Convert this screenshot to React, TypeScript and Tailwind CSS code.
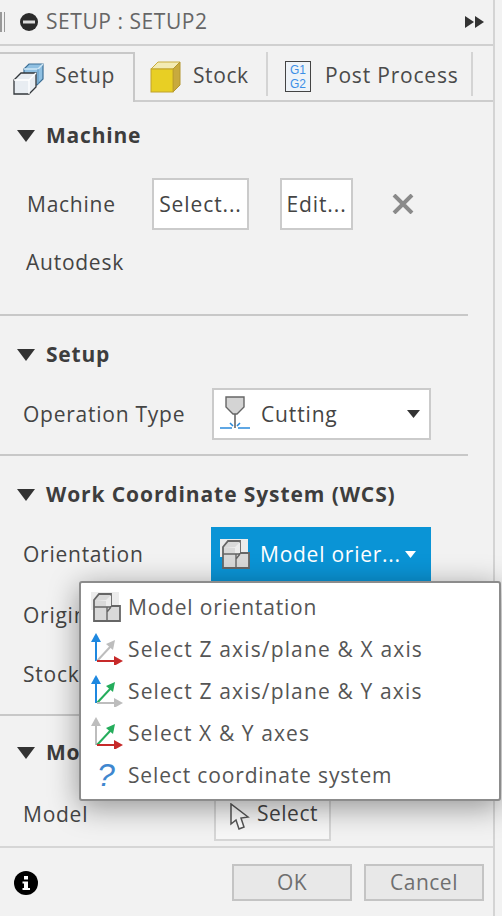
import type { ReactNode } from 'react'

const font = { fontFamily: '"Open Sans", "DejaVu Sans", sans-serif' }

function Caret() {
  return (
    <svg width="18" height="12" viewBox="0 0 18 12" className="shrink-0">
      <polygon points="0,0 18,0 9,12" fill="#333" />
    </svg>
  )
}

function Heading({ children, className = 'tracking-[0.8px]' }: { children: ReactNode; className?: string }) {
  return (
    <div className="ml-[17px] flex h-[28px] items-center gap-[11px]">
      <Caret />
      <span className={`text-[21px] font-bold text-[#3d3d3d] ${className}`}>{children}</span>
    </div>
  )
}

function Label({ children, className = '' }: { children: ReactNode; className?: string }) {
  return <span className={`text-[21px] tracking-[0.75px] text-[#444] ${className}`}>{children}</span>
}

function SetupIcon() {
  return (
    <svg width="31" height="33" viewBox="0 0 31 33">
      <path d="M11 7 L16 2 L30 2 L30 17 L24 23 L11 23 Z" fill="#8fc0e2" stroke="#3c6f96" strokeWidth="1.2" />
      <path d="M11 7 L25 7 L30 2" fill="none" stroke="#cfe6f5" strokeWidth="1.4" />
      <path d="M25 7 V22" stroke="#5f98c2" strokeWidth="1" />
      <path d="M1 18 L8 11 L23 11 L23 25 L16 32 L1 32 Z" fill="#e8edf2" stroke="#33373b" strokeWidth="1.3" />
      <path d="M1 18 L16 18 L23 11 M16 18 V32" fill="none" stroke="#fff" strokeWidth="1.3" />
    </svg>
  )
}

function StockIcon() {
  return (
    <svg width="31" height="32" viewBox="0 0 31 32">
      <polygon points="1,8 8,1 30,1 23,8" fill="#f3ebb4" stroke="#c9ad3c" />
      <polygon points="23,8 30,1 30,24 23,31" fill="#c8aa3e" stroke="#b3962f" />
      <rect x="1" y="8" width="22" height="23" fill="#e8cf24" stroke="#c0a22c" />
    </svg>
  )
}

function CuttingIcon() {
  return (
    <svg width="32" height="36" viewBox="0 0 32 36">
      <path d="M6 1 H24 V11 L17 18 H13 L6 11 Z" fill="#d4d4d4" stroke="#666" strokeWidth="1.4" />
      <path d="M15 18 V32" stroke="#666" strokeWidth="1.6" />
      <path d="M0 32 H12 M18 32 H30 M10 27 L13 30 M20 27 L17 30" stroke="#2b8adb" strokeWidth="1.6" />
    </svg>
  )
}

function ModelIcon() {
  return (
    <svg width="30" height="31" viewBox="0 0 30 31" className="shrink-0">
      <rect x="0" y="0" width="28" height="18" fill="#ececec" />
      <path d="M3 8 L8 2 H20 V14 H29 V29 H3 Z" fill="#d9d9d9" stroke="#666" strokeWidth="1.8" />
      <path d="M4 8 H15 L20 3 V14 H15 V9 Z" fill="#ececec" />
      <path d="M3 15 H20 M16 15 V29 M20 15 L16 20" fill="none" stroke="#666" strokeWidth="1.4" />
    </svg>
  )
}

function AxisIcon({ up, diagonal, right }: { up: string; diagonal: string; right: string }) {
  return (
    <svg width="34" height="32" viewBox="0 0 34 32" className="shrink-0">
      <path d="M5 28 V8" stroke={up} strokeWidth="2" />
      <polygon points="0,9 5,0 10,9" fill={up} />
      <path d="M6 28 L20 13" stroke={diagonal} strokeWidth="2" />
      <polygon points="15,11 24,7 22,17" fill={diagonal} />
      <path d="M6 28 H24" stroke={right} strokeWidth="2" />
      <polygon points="23,23 32,28 23,33" fill={right} />
    </svg>
  )
}

function MenuRow({ icon, tracking, children }: { icon: ReactNode; tracking: string; children: ReactNode }) {
  return (
    <div className="flex h-[42px] items-center">
      <div className="flex w-[47px] shrink-0 justify-start pl-[10px]">{icon}</div>
      <span className={`mt-[2px] text-[21px] text-[#555] ${tracking}`}>{children}</span>
    </div>
  )
}

export default function App() {
  return (
    <div className="relative h-[916px] w-[502px] overflow-hidden bg-[#f2f2f2]" style={font}>
      <div className="h-[916px] w-[495px] border-r-2 border-[#d4d4d4]">
        <header className="flex h-[46px] items-center border-b-2 border-[#d0d0d0] pr-[8px]">
          <div className="flex h-[20px] w-[7px] gap-[2px]">
            <span className="w-[2px] bg-[#999]" />
            <span className="w-[1px] bg-[#999]" />
          </div>
          <svg width="20" height="20" viewBox="0 0 20 20" className="ml-[12px]">
            <circle cx="10" cy="10" r="9" fill="#2b2b2b" />
            <rect x="4" y="8.5" width="12" height="3" fill="#ddd" />
          </svg>
          <span className="ml-[7px] text-[21px] tracking-[0.55px] text-[#666]">SETUP : SETUP2</span>
          <svg width="20" height="12" viewBox="0 0 20 12" className="ml-auto">
            <polygon points="0,0 9,6 0,12" fill="#333" />
            <polygon points="10,0 19,6 10,12" fill="#333" />
          </svg>
        </header>

        <nav className="mt-[6px] flex h-[50px]">
          <div className="flex w-[135px] items-center gap-[11px] border-t-2 border-r-2 border-[#c8c8c8] pl-[13px]">
            <SetupIcon />
            <span className="mb-[4px] text-[21px] tracking-[0.7px] text-[#4a4a4a]">Setup</span>
          </div>
          <div className="flex flex-1 border-b-2 border-[#cdcdcd]">
            <div className="mb-[4px] flex w-[133px] items-center gap-[12px] border-r-2 border-[#d4d4d4] pt-[6px] pl-[15px]">
              <StockIcon />
              <span className="mb-[3px] text-[21px] tracking-[0.6px] text-[#4a4a4a]">Stock</span>
            </div>
            <div className="mb-[4px] flex w-[205px] items-center gap-[14px] border-r-2 border-[#d4d4d4] pt-[5px] pl-[17px]">
              <div className="flex h-[31px] w-[26px] flex-col items-center justify-center border border-[#444] bg-[#eef3f8] text-[12px] leading-[14px] text-[#3b8ee6]" style={{ fontFamily: '"Liberation Sans", sans-serif' }}>
                <span>G1</span>
                <span>G2</span>
              </div>
              <span className="mb-[2px] text-[21px] tracking-[0.8px] text-[#4a4a4a]">Post Process</span>
            </div>
          </div>
        </nav>

        <section className="h-[212px] pt-[20px]">
          <Heading>Machine</Heading>
          <div className="mt-[28px] flex h-[52px] items-center pl-[27px]">
            <Label className="mt-[2px] w-[125px] tracking-[0.5px]">Machine</Label>
            <button className="h-[52px] w-[97px] border-2 border-[#cbcbcb] bg-white pt-[2px] text-[21px] tracking-[0.9px] text-[#444]">Select...</button>
            <button className="ml-[31px] h-[52px] w-[73px] border-2 border-[#cbcbcb] bg-white pt-[2px] text-[21px] tracking-[0.9px] text-[#444]">Edit...</button>
            <svg width="22" height="20" viewBox="0 0 22 20" className="ml-[39px]">
              <path d="M2 1 L20 19 M20 1 L2 19" stroke="#8a8a8a" strokeWidth="4" />
            </svg>
          </div>
          <div className="mt-[19px] flex h-[28px] items-center pl-[26px]">
            <Label>Autodesk</Label>
          </div>
        </section>
        <div className="h-[2px] w-[468px] bg-[#c8c8c8]" />

        <section className="h-[138px] pt-[25px]">
          <Heading>Setup</Heading>
          <div className="mt-[19px] flex h-[52px] items-center pl-[23px]">
            <Label className="mt-[2px] w-[189px]">Operation Type</Label>
            <div className="flex h-[52px] w-[219px] items-center border-2 border-[#cbcbcb] bg-white pl-[6px]">
              <CuttingIcon />
              <span className="mt-[2px] ml-[9px] text-[21px] tracking-[0.85px] text-[#444]">Cutting</span>
              <svg width="13" height="8" viewBox="0 0 13 8" className="mr-[9px] ml-auto">
                <polygon points="0,0 13,0 6.5,8" fill="#333" />
              </svg>
            </div>
          </div>
        </section>
        <div className="h-[2px] w-[468px] bg-[#c8c8c8]" />

        <section className="h-[258px] pt-[25px]">
          <Heading className="tracking-[0.9px]">Work Coordinate System (WCS)</Heading>
          <div className="mt-[18px] flex h-[54px] items-center pl-[23px]">
            <Label className="mt-[2px] w-[188px]">Orientation</Label>
            <div className="flex h-[54px] w-[220px] items-center bg-[#0a94d6] pl-[9px]">
              <ModelIcon />
              <span className="mt-[2px] ml-[10px] text-[21px] tracking-[0.75px] text-white">Model orier...</span>
              <svg width="11" height="7" viewBox="0 0 11 7" className="ml-[4px]">
                <polygon points="0,0 11,0 5.5,7" fill="#fff" />
              </svg>
            </div>
          </div>
          <div className="mt-[21px] flex h-[28px] items-center pl-[23px]">
            <Label>Origin</Label>
          </div>
          <div className="mt-[31px] flex h-[28px] items-center pl-[23px]">
            <Label>Stock Point</Label>
          </div>
        </section>
        <div className="h-[2px] w-[468px] bg-[#c8c8c8]" />

        <section className="h-[130px] pt-[23px]">
          <Heading>Model</Heading>
          <div className="mt-[28px] flex h-[46px] items-center pl-[23px]">
            <Label className="mb-[6px] w-[191px]">Model</Label>
            <div className="flex h-[46px] w-[117px] items-center gap-[7px] border-2 border-t-0 border-[#d6d6d6] bg-[#f7f7f7] pl-[13px]">
              <svg width="21" height="28" viewBox="0 0 21 28" className="shrink-0">
                <path d="M2 1 V21 L7 17 L10 26 L15 24 L12 15 L19 14 Z" fill="#fff" stroke="#555" strokeWidth="1.5" />
              </svg>
              <span className="mb-[6px] text-[21px] tracking-[0.5px] text-[#444]">Select</span>
            </div>
          </div>
        </section>

        <footer className="flex h-[70px] items-center border-t-2 border-[#d6d6d6] pl-[14px]">
          <svg width="24" height="24" viewBox="0 0 24 24" className="mt-[2px] shrink-0">
            <circle cx="12" cy="12" r="12" fill="#000" />
            <rect x="10" y="5" width="4" height="3.5" fill="#fff" />
            <path d="M8.5 10.5 H14 V17 H16 V19 H8.5 V17 H10 V12.5 H8.5 Z" fill="#fff" />
          </svg>
          <button className="ml-[194px] h-[37px] w-[120px] border-2 border-[#c4c4c4] bg-[#e8e8e8] pt-[1px] text-[21px] tracking-[0.5px] text-[#6f6f6f]">OK</button>
          <button className="ml-[12px] h-[37px] w-[120px] border-2 border-[#c4c4c4] bg-[#e8e8e8] pt-[1px] text-[21px] tracking-[0.5px] text-[#6f6f6f]">Cancel</button>
        </footer>
      </div>

      <div className="absolute top-[581px] left-[79px] flex h-[220px] w-[422px] flex-col justify-center rounded-[3px] border-2 border-[#8c8c8c] bg-white shadow-[0_6px_30px_rgba(0,0,0,0.4)]">
        <MenuRow icon={<ModelIcon />} tracking="tracking-[0.8px]">Model orientation</MenuRow>
        <MenuRow icon={<AxisIcon up="#1e88e0" diagonal="#bdbdbd" right="#c72a2a" />} tracking="tracking-[1.15px]">Select Z axis/plane &amp; X axis</MenuRow>
        <MenuRow icon={<AxisIcon up="#1e88e0" diagonal="#25ad5c" right="#bdbdbd" />} tracking="tracking-[1.15px]">Select Z axis/plane &amp; Y axis</MenuRow>
        <MenuRow icon={<AxisIcon up="#bdbdbd" diagonal="#25ad5c" right="#c72a2a" />} tracking="tracking-[1.1px]">Select X &amp; Y axes</MenuRow>
        <MenuRow icon={<span className="ml-[6px] text-[32px] leading-none font-normal text-[#3f87cf] italic" style={{ fontFamily: '"Liberation Sans", sans-serif' }}>?</span>} tracking="tracking-[0.85px]">Select coordinate system</MenuRow>
      </div>
    </div>
  )
}
